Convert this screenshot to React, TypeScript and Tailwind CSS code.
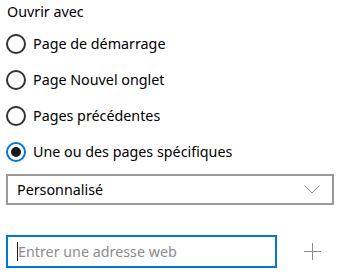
import React from 'react';

const options = [
  'Page de démarrage',
  'Page Nouvel onglet',
  'Pages précédentes',
  'Une ou des pages spécifiques',
];

const Radio = ({ checked }: { checked: boolean }) =>
  checked ? (
    <span className="w-5 h-5 rounded-full border-2 border-[#0078d7] flex items-center justify-center shrink-0">
      <span className="w-[10px] h-[10px] rounded-full bg-[#1a1a1a]" />
    </span>
  ) : (
    <span className="w-5 h-5 rounded-full border-2 border-[#333333] shrink-0" />
  );

export default function App() {
  const [selected, setSelected] = React.useState(3);

  return (
    <div className="w-[340px] h-[278px] bg-white text-black text-[14.3px] leading-5 px-[6px] pt-[2px] font-['Noto_Sans','Liberation_Sans',sans-serif]">
      <div className="pl-px">Ouvrir avec</div>

      <div className="flex flex-col mt-[4px]">
        {options.map((label, i) => (
          <button
            key={label}
            onClick={() => setSelected(i)}
            className="flex items-center gap-[7px] h-9 text-left"
          >
            <Radio checked={selected === i} />
            <span>{label}</span>
          </button>
        ))}
      </div>

      <div className="mt-[4px] h-[31px] w-[328px] border-2 border-[#999999] flex items-center justify-between pl-[9px] pr-[12px]">
        <span>Personnalisé</span>
        <svg width="16" height="9" viewBox="0 0 16 9" fill="none" stroke="#8a8a8a" strokeWidth="1">
          <path d="M0.5 0.5 L8 8 L15.5 0.5" />
        </svg>
      </div>

      <div className="mt-[30px] flex items-center">
        <div className="h-[33px] w-[271px] border-2 border-[#0078d7] flex items-center pl-[9px]">
          <span className="w-px h-[19px] bg-[#1a1a1a]" />
          <span className="text-[#8c8c8c]">Entrer une adresse web</span>
        </div>
        <svg className="ml-[27px]" width="17" height="17" viewBox="0 0 17 17" stroke="#8a8a8a" strokeWidth="1">
          <path d="M8.5 0 V17 M0 8.5 H17" />
        </svg>
      </div>
    </div>
  );
}
